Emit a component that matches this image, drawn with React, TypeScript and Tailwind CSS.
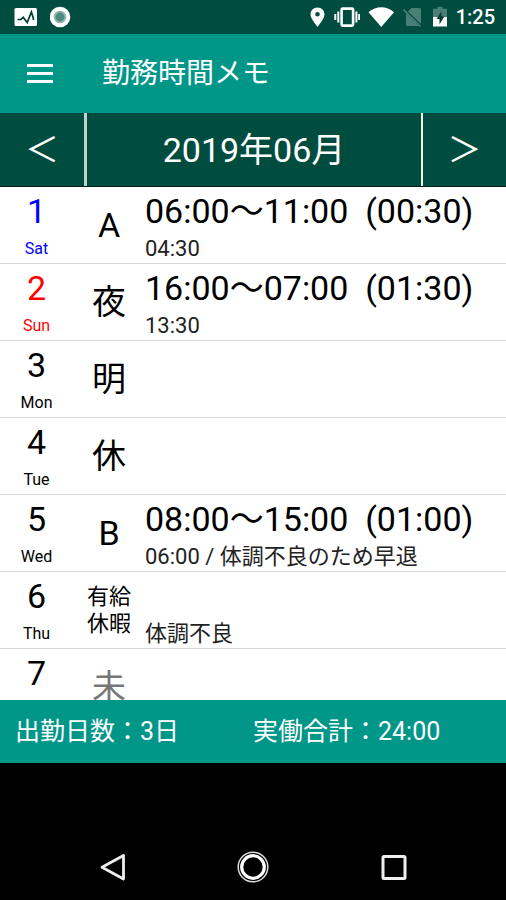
type Day = {
  date: number;
  weekday: string;
  shift: string[];
  time?: string;
  note?: string;
  tone?: string;
  shiftTone?: string;
};

const days: Day[] = [
  { date: 1, weekday: 'Sat', shift: ['A'], time: '06:00〜11:00  (00:30)', note: '04:30', tone: 'text-[#0000ff]' },
  { date: 2, weekday: 'Sun', shift: ['夜'], time: '16:00〜07:00  (01:30)', note: '13:30', tone: 'text-[#ff0000]' },
  { date: 3, weekday: 'Mon', shift: ['明'] },
  { date: 4, weekday: 'Tue', shift: ['休'] },
  { date: 5, weekday: 'Wed', shift: ['B'], time: '08:00〜15:00  (01:00)', note: '06:00 / 体調不良のため早退' },
  { date: 6, weekday: 'Thu', shift: ['有給', '休暇'], note: '体調不良' },
  { date: 7, weekday: 'Fri', shift: ['未'], shiftTone: 'text-[#777777]' },
];

function StatusBar() {
  return (
    <div className="flex h-[34px] shrink-0 items-center justify-between bg-[#004d40] pr-[11px] pl-[14px] text-white">
      <div className="flex items-center gap-3">
        <svg className="h-5 w-6" viewBox="0 0 24 20" aria-hidden="true">
          <rect x="0.5" y="1" width="22.5" height="18" rx="1.5" fill="#fff" />
          <path d="M3.5 12.5h3.5l2.2-2.2 4 5.2 4.2-10.5 2 6.5v1.5" fill="none" stroke="#003c32" strokeWidth="1.7" />
        </svg>
        <svg className="size-[22px]" viewBox="0 0 22 22" aria-hidden="true">
          <circle cx="10" cy="11" r="10.3" fill="#fff" />
          <circle cx="10" cy="11" r="6.3" fill="#8db5ad" />
          <circle cx="10" cy="11" r="4.4" fill="#4f8a80" />
        </svg>
      </div>
      <div className="flex items-center gap-2">
        <svg className="h-5 w-4" viewBox="0 0 16 20" aria-hidden="true">
          <path fillRule="evenodd" fill="#fff" d="M7.5 0.5C3.500.5.5 3.500.5 7.300.5 12.200 7.500 19.800 7.500 19.800s7-7.600 7-12.500C14.500 3.500 11.500.5 7.500.5zM7.500 5a2.300 2.300 0 1 1 0 4.600 2.300 2.300 0 0 1 0-4.600z" />
        </svg>
        <svg className="h-5 w-[26px]" viewBox="0 0 26 20" aria-hidden="true">
          <rect x="7.6" y="1.600" width="11.500" height="17" rx="1" fill="none" stroke="#fff" strokeWidth="2.600" />
          <path d="M4.300 4.500v11M1.300 7v6M22.400 4.500v11M25.200 7v6" stroke="#fff" strokeWidth="2" />
        </svg>
        <svg className="h-5 w-[27px]" viewBox="0 0 27 20" aria-hidden="true">
          <path d="M0.500 5.200C8-1.400 18.500-1.400 26 5.200L13.250 20z" fill="#fff" />
        </svg>
        <svg className="h-5 w-[22px]" viewBox="0 0 22 20" aria-hidden="true">
          <path d="M8.500 1H16.500a1.500 1.500 0 0 1 1.500 1.500v14.500L5 4.500zM3 6.500L16 19H4.500A1.500 1.500 0 0 1 3 17.500z" fill="#4a7f76" />
          <path d="M0.500 2.500L17.500 19.500" stroke="#4a7f76" strokeWidth="1.600" />
        </svg>
        <svg className="h-[22px] w-[15px]" viewBox="0 0 15 22" aria-hidden="true">
          <path d="M4.500 0.800h5v2h4.500v9H0v-9h4.500z" fill="#4a7f76" />
          <path d="M0 11h14v9.500H0z" fill="#fff" />
          <path d="M8.300 5.500L3.500 13h3v5.500L11.300 10.500H8.300z" fill="#003c32" />
        </svg>
        <span className="text-[20px] leading-6 font-medium">1:25</span>
      </div>
    </div>
  );
}

function DayRow({ day }: { day: Day }) {
  return (
    <li className="flex h-[77px] border-b border-[#d9d9d9] text-black">
      <div className={`w-[73px] shrink-0 text-center ${day.tone ?? ''}`}>
        <div className="text-[34px] leading-[48px]">{day.date}</div>
        <div className="text-base leading-7">{day.weekday}</div>
      </div>
      <div className={`flex w-[72px] shrink-0 flex-col items-center justify-center ${day.shiftTone ?? ''}`}>
        {day.shift.map((line) => (
          <span key={line} className={day.shift.length > 1 ? 'text-[22px] leading-[27px]' : 'text-[34px] leading-10'}>
            {line}
          </span>
        ))}
      </div>
      <div className="min-w-0 flex-1 whitespace-pre">
        <div className="h-12 text-[34px] leading-[48px]">{day.time}</div>
        <div className="text-[22px] leading-7 text-[#222222]">{day.note}</div>
      </div>
    </li>
  );
}

export default function App() {
  return (
    <div className="flex h-screen flex-col overflow-hidden bg-black font-['Roboto','Noto_Sans_CJK_JP',sans-serif]">
      <StatusBar />

      <header className="flex h-[79px] shrink-0 items-center gap-12 bg-[#009688] pl-[26px] text-white">
        <button type="button" aria-label="メニュー" className="flex h-7 w-7 items-center">
          <svg className="h-5 w-7" viewBox="0 0 28 20" aria-hidden="true">
            <path d="M1 1.500h26M1 9.500h26M1 17.500h26" stroke="#fff" strokeWidth="3" />
          </svg>
        </button>
        <h1 className="text-[28px] leading-10">勤務時間メモ</h1>
      </header>

      <nav className="flex h-[74px] shrink-0 border-b border-[#001f18] bg-[#004d40] text-[34px] leading-10 text-white">
        <button type="button" aria-label="前の月" className="w-[87px] border-r-3 border-[#c4cfcc]">
          ＜
        </button>
        <h2 className="flex flex-1 items-center justify-center">2019年06月</h2>
        <button type="button" aria-label="次の月" className="w-[85px] border-l-2 border-[#f5f5e8]">
          ＞
        </button>
      </nav>

      <ul className="min-h-0 flex-1 overflow-hidden bg-white">
        {days.map((day) => (
          <DayRow key={day.date} day={day} />
        ))}
      </ul>

      <footer className="grid h-[63px] shrink-0 grid-cols-2 items-center bg-[#009688] text-[25px] leading-8 text-white">
        <p className="pl-[15px]">出勤日数：3日</p>
        <p>実働合計：24:00</p>
      </footer>

      <div className="h-[70px] shrink-0" />
      <div className="grid h-[67px] shrink-0 grid-cols-3 items-center justify-items-center px-[43px]">
        <button type="button" aria-label="戻る">
          <svg className="size-8" viewBox="0 0 32 32" aria-hidden="true">
            <path d="M26.500 4.500v23.500L5 16.250z" fill="none" stroke="#eee" strokeWidth="2.800" strokeLinejoin="round" />
          </svg>
        </button>
        <button type="button" aria-label="ホーム">
          <svg className="size-8" viewBox="0 0 32 32" aria-hidden="true">
            <circle cx="16" cy="16" r="14.800" fill="none" stroke="#ddd" strokeWidth="1.500" />
            <circle cx="16" cy="16" r="11.300" fill="none" stroke="#fff" strokeWidth="3.200" />
          </svg>
        </button>
        <button type="button" aria-label="アプリ履歴">
          <svg className="size-8" viewBox="0 0 32 32" aria-hidden="true">
            <rect x="6" y="5.500" width="22" height="22" rx="1" fill="none" stroke="#eee" strokeWidth="3" />
          </svg>
        </button>
      </div>
    </div>
  );
}
